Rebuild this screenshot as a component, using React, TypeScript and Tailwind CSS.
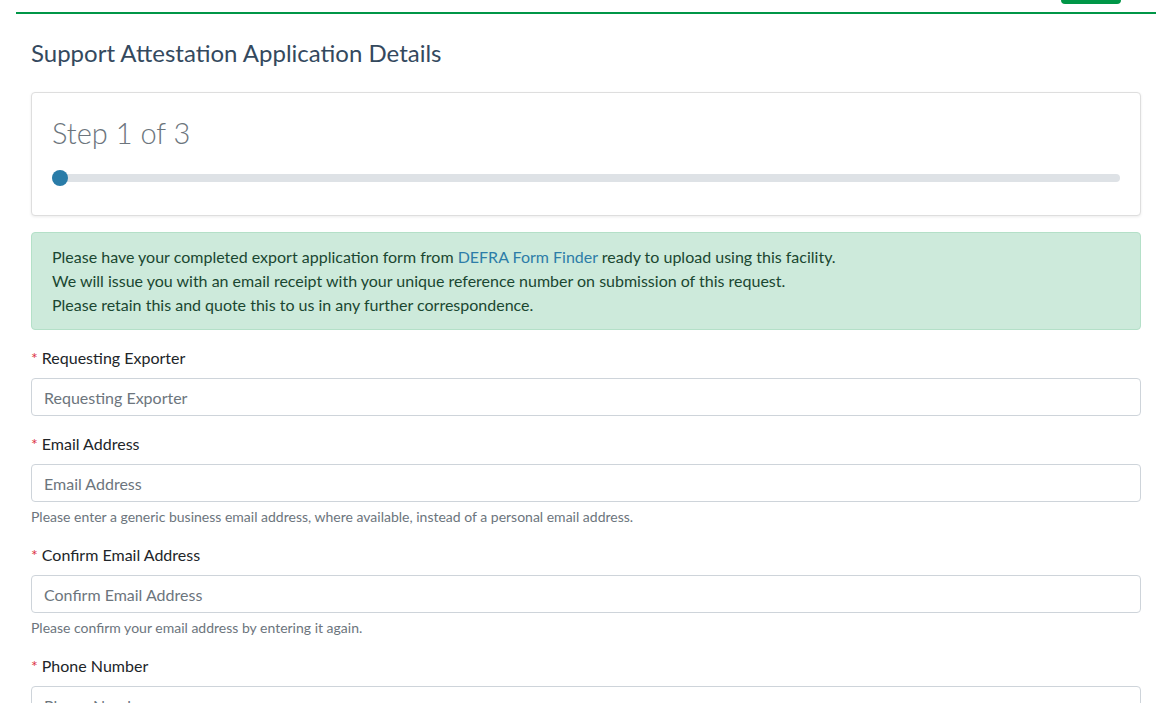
import React from 'react'

const fields = [
  { label: 'Requesting Exporter', help: '' },
  {
    label: 'Email Address',
    help: 'Please enter a generic business email address, where available, instead of a personal email address.',
  },
  { label: 'Confirm Email Address', help: 'Please confirm your email address by entering it again.' },
  { label: 'Phone Number', help: '' },
]

export default function App() {
  return (
    <div className="h-[703px] overflow-hidden bg-white font-['Lato',sans-serif] text-[16px] leading-[1.5] text-[#212529]">
      {/* top nav remnant */}
      <div className="h-[12px] flex">
        <div className="ml-[1061px] w-[60px] h-[4px] rounded-b-[4px] bg-[#009647]" />
      </div>
      <div className="ml-[16px] w-[1140px] h-[2px] bg-[#009647]" />

      <div className="ml-[31px] w-[1110px]">
        <h4 className="mt-[24px] mb-[25px] text-[24px] leading-[29px] text-[#34495e]">
          Support Attestation Application Details
        </h4>

        {/* progress card */}
        <div className="rounded-[4px] border border-[#dedede] bg-white shadow-[0_1px_3px_rgba(0,0,0,0.08)] px-[20px] pt-[20px] pb-[33px]">
          <div className="text-[29px] leading-[40px] font-light text-[#6c757d]">Step 1 of 3</div>
          <div className="relative mt-[21px] h-[8px] rounded-full bg-[#dee2e6]">
            <div className="absolute left-0 top-[-4px] w-[16px] h-[16px] rounded-full bg-[#2a7ca8]" />
          </div>
        </div>

        {/* info alert */}
        <div className="mt-[16px] rounded-[4px] border border-[#b4e0c8] bg-[#cdeadb] px-[20px] py-[12px] text-[#1a4731]">
          <div>
            Please have your completed export application form from{' '}
            <a className="text-[#2c7da8]">DEFRA Form Finder</a> ready to upload using this facility.
          </div>
          <div>We will issue you with an email receipt with your unique reference number on submission of this request.</div>
          <div>Please retain this and quote this to us in any further correspondence.</div>
        </div>

        <form className="mt-[16px]">
          {fields.map(f => (
            <div key={f.label} className="mb-[16px]">
              <label className="block mb-[8px]">
                <span className="text-[#dc3545] mr-[4px]">*</span>
                {f.label}
              </label>
              <input
                placeholder={f.label}
                className="block w-full h-[38px] rounded-[4px] border border-[#ced4da] px-[12px] text-[16px] placeholder:text-[#6c757d] outline-none"
              />
              {f.help && <div className="mt-[4px] text-[14px] leading-[21px] text-[#6c757d]">{f.help}</div>}
            </div>
          ))}
        </form>
      </div>
    </div>
  )
}
